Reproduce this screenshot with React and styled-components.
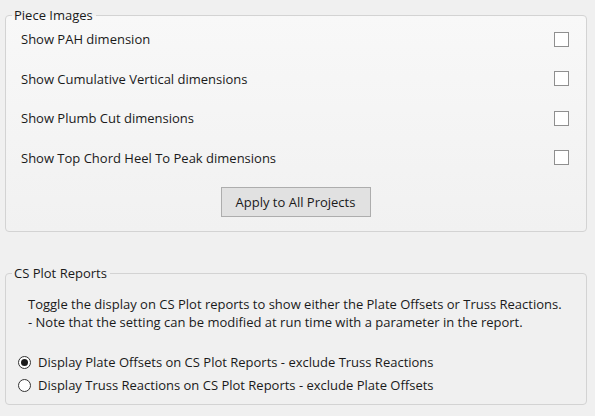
import React, { useState } from "react";
import styled, { createGlobalStyle } from "styled-components";

const Global = createGlobalStyle`
  html, body { margin: 0; padding: 0; background: #f0f0f0; }
  body {
    font-family: "Segoe UI", "Open Sans", "Noto Sans", sans-serif;
    font-size: 13px;
    color: #1a1a1a;
  }
`;

const Page = styled.div`
  width: 595px;
  height: 416px;
  box-sizing: border-box;
  padding: 7px 8px 0 5px;
  display: flex;
  flex-direction: column;
  gap: ${p => p.$gap}px;
`;

const Group = styled.fieldset`
  margin: 0;
  min-width: 0;
  border: 1px solid #d3d3d3;
  border-radius: 4px;
  background: ${p => p.$shaded ? "linear-gradient(#f8f8f8, #f1f1f1)" : "#f0f0f0"};
  padding: ${p => p.$pad};
`;

const Legend = styled.legend`
  padding: 0 3px 0 2px;
  margin-left: 6px;
  line-height: 16px;
  font-size: 13px;
  color: #1a1a1a;
`;

const Body = styled.div`
  padding: ${p => p.$pad};
`;

const Rows = styled.div`
  display: grid;
  grid-auto-rows: 20px;
  row-gap: 19.5px;
`;

const Row = styled.label`
  display: flex;
  align-items: center;
  justify-content: space-between;
  line-height: 20px;
`;

const Check = styled.span`
  width: 15px;
  height: 15px;
  box-sizing: border-box;
  border: 1px solid #8f8f8f;
  background: #fff;
  margin-right: 1px;
`;

const ButtonBar = styled.div`
  display: flex;
  justify-content: center;
  margin-top: 19.5px;
`;

const Button = styled.button`
  width: 150px;
  height: 30px;
  box-sizing: border-box;
  border: 1px solid #adadad;
  background: #e1e1e1;
  font: inherit;
  color: #1a1a1a;
  padding: 0;
  cursor: default;
`;

const Para = styled.p`
  margin: 0 0 0 10px;
  line-height: 18px;
`;

const Radios = styled.div`
  display: grid;
  grid-auto-rows: 23px;
  margin-top: 19.5px;
`;

const RadioRow = styled.label`
  display: flex;
  align-items: center;
  gap: 7px;
`;

const RadioDot = styled.span`
  width: 13px;
  height: 13px;
  box-sizing: border-box;
  border-radius: 50%;
  border: 1px solid #333;
  background: #fff;
  display: flex;
  align-items: center;
  justify-content: center;
  &::after {
    content: "";
    width: 7px;
    height: 7px;
    border-radius: 50%;
    background: ${p => p.$on ? "#1a1a1a" : "transparent"};
  }
`;

const items = [
  "Show PAH dimension",
  "Show Cumulative Vertical dimensions",
  "Show Plumb Cut dimensions",
  "Show Top Chord Heel To Peak dimensions",
];

export default function App() {
  const [sel, setSel] = useState(0);
  const radios = [
    "Display Plate Offsets on CS Plot Reports - exclude Truss Reactions",
    "Display Truss Reactions on CS Plot Reports - exclude Plate Offsets",
  ];
  return (
    <>
      <Global />
      <Page $gap={33}>
        <Group $shaded $pad="6px 0 14px 0">
          <Legend>Piece Images</Legend>
          <Body $pad="0 16px 0 15px">
            <Rows>
              {items.map(t => (
                <Row key={t}>
                  <span>{t}</span>
                  <Check />
                </Row>
              ))}
            </Rows>
            <ButtonBar>
              <Button>Apply to All Projects</Button>
            </ButtonBar>
          </Body>
        </Group>
        <Group $pad="14px 0 7px 0">
          <Legend>CS Plot Reports</Legend>
          <Body $pad="0 16px 0 12px">
            <Para>
              Toggle the display on CS Plot reports to show either the Plate Offsets or Truss Reactions.
              <br />
              - Note that the setting can be modified at run time with a parameter in the report.
            </Para>
            <Radios>
              {radios.map((t, i) => (
                <RadioRow key={t} onClick={() => setSel(i)}>
                  <RadioDot $on={sel === i} />
                  <span>{t}</span>
                </RadioRow>
              ))}
            </Radios>
          </Body>
        </Group>
      </Page>
    </>
  );
}
